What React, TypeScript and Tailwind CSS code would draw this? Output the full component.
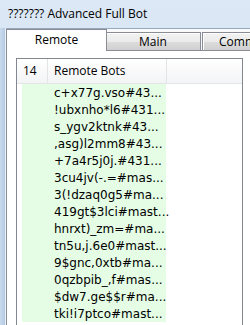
import React from 'react';

const bots = [
  'c+x77g.vso#43...',
  '!ubxnho*l6#431...',
  's_ygv2ktnk#43...',
  ',asg)l2mm8#43...',
  '+7a4r5j0j.#431...',
  '3cu4jv(-.=#mas...',
  '3(!dzaq0g5#ma...',
  '419gt$3lci#mast...',
  'hnrxt)_zm=#ma...',
  'tn5u,j.6e0#mast...',
  '9$gnc,0xtb#ma...',
  '0qzbpib_,f#mas...',
  '$dw7.ge$$r#ma...',
  'tki!i7ptco#mast...',
];

export default function App() {
  return (
    <div className="w-[250px] h-[325px] overflow-hidden flex flex-col bg-[linear-gradient(to_bottom,#dce8f5,#c4d7ec)] font-['Open_Sans',sans-serif] text-black">
      {/* title bar */}
      <div className="h-[28px] shrink-0 flex items-center pl-[8px] text-[12px] leading-none">??????? Advanced Full Bot</div>

      <div className="flex-1 flex min-h-0">
        {/* window frame */}
        <div className="w-[6px] shrink-0 bg-[linear-gradient(to_right,#c9dbee,#b4c9e2)] border-r border-[#eef3f9]" />

        {/* client area */}
        <div className="flex-1 flex flex-col min-h-0 bg-[#f7f9fb] border-t border-[#9aaabd]">
          {/* tabs */}
          <div className="h-[21px] shrink-0 flex items-end text-[12px] leading-none">
            <div className="relative z-10 w-[101px] h-[22px] -mb-px bg-white border-l border-t border-r border-[#898c95] flex items-center justify-center pb-[2px]">Remote</div>
            <div className="w-[95px] h-[18px] -ml-px border-t border-r border-[#898c95] bg-[linear-gradient(to_bottom,#f2f2f2_0%,#ebebeb_50%,#dddddd_50%,#cfcfcf_100%)] shadow-[inset_1px_1px_0_#fff] flex items-center justify-center">Main</div>
            <div className="w-[60px] h-[18px] ml-px border-t border-l border-[#898c95] bg-[linear-gradient(to_bottom,#f2f2f2_0%,#ebebeb_50%,#dddddd_50%,#cfcfcf_100%)] shadow-[inset_1px_1px_0_#fff] flex items-center pl-[16px]">Comm</div>
          </div>

          {/* tab panel */}
          <div className="flex-1 min-h-0 bg-white border-l border-t border-[#898c95] pl-[9px] pt-[7px]">
            <div className="w-[227px] h-full border-l border-t border-r border-[#828790] bg-white">
              {/* header */}
              <div className="h-[25px] flex border-b border-[#e5e5e5] bg-[linear-gradient(to_bottom,#ffffff,#f3f4f6)] text-[12px] leading-none">
                <div className="w-[31px] border-r border-[#e3e4e6] flex items-center pl-[6px]">14</div>
                <div className="w-[119px] border-r border-[#e3e4e6] flex items-center pl-[6px]">Remote Bots</div>
                <div className="flex-1" />
              </div>
              {/* rows */}
              <div className="flex flex-col font-['DejaVu_Sans',sans-serif] text-[12px]">
                {bots.map((b) => (
                  <div key={b} className="h-[17px] flex">
                    <div className="w-[5px]" />
                    <div className="w-[144px] bg-[#e5fde5] flex items-center pl-[32px] whitespace-nowrap">{b}</div>
                  </div>
                ))}
              </div>
            </div>
          </div>
        </div>
      </div>
    </div>
  );
}
